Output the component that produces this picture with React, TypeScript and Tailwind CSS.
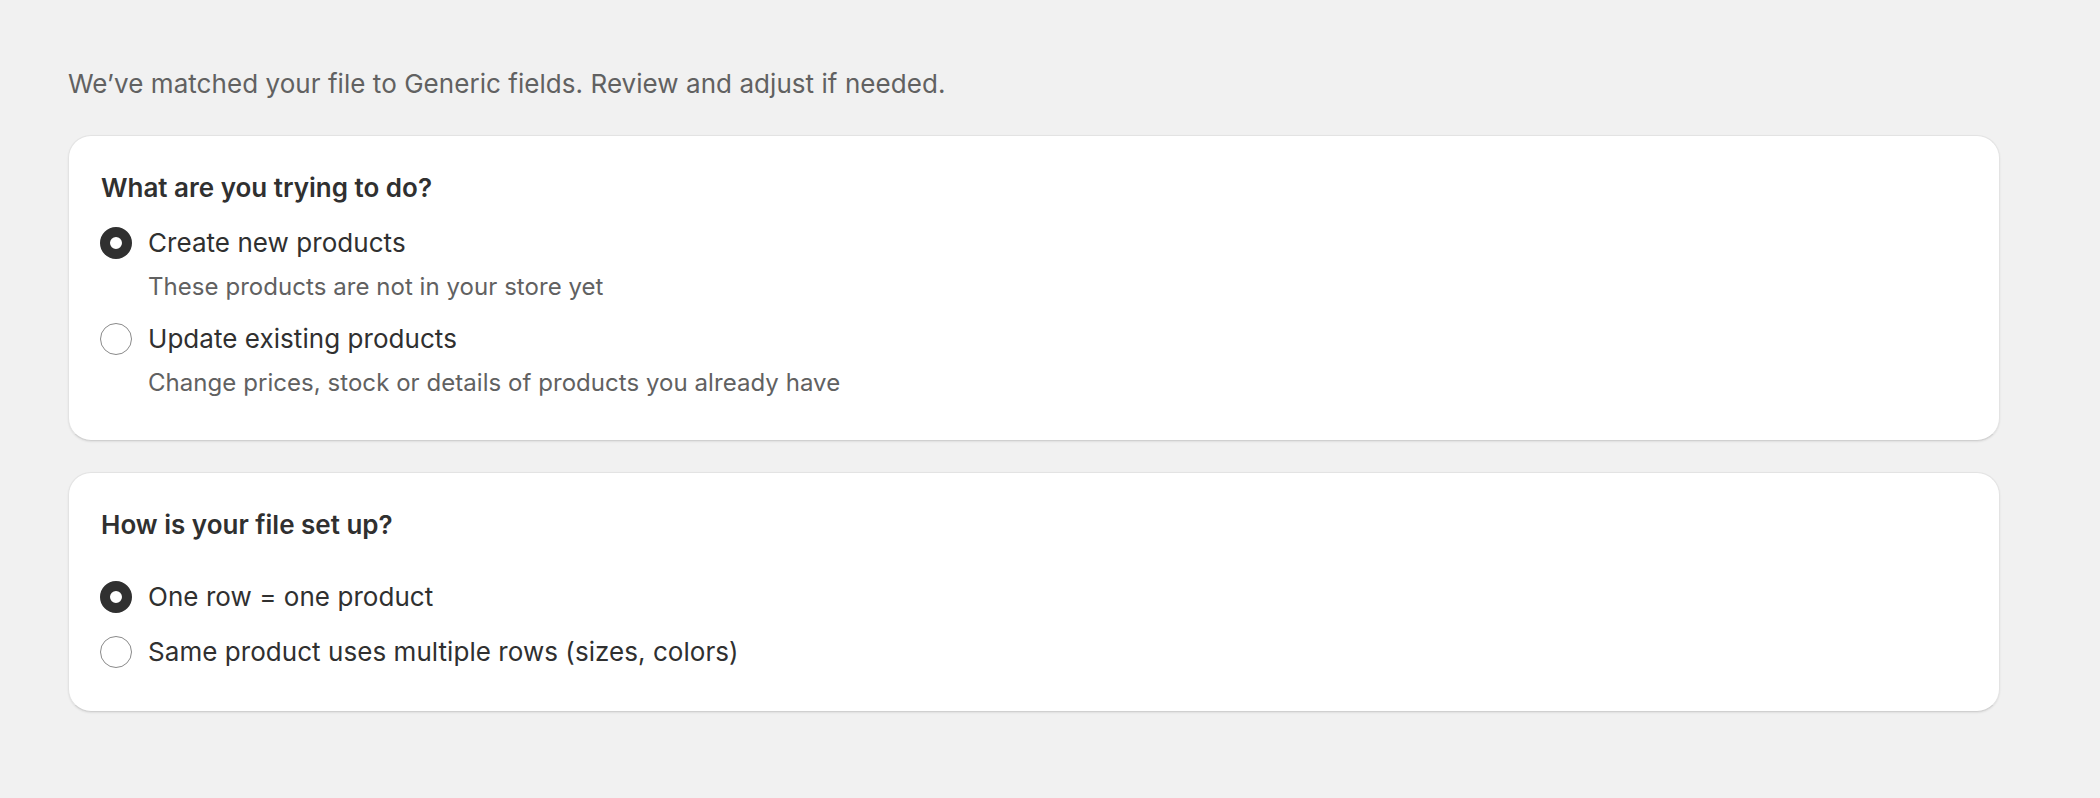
import React from 'react';

type Option = { label: string; description?: string; selected?: boolean };

function Radio({ selected }: { selected?: boolean }) {
  if (selected) {
    return <span className="block h-[32px] w-[32px] shrink-0 rounded-full border-[10px] border-[#303030] bg-white" />;
  }
  return <span className="block h-[32px] w-[32px] shrink-0 rounded-full border-[1.5px] border-[#8a8a8a] bg-white" />;
}

function OptionRow({ option }: { option: Option }) {
  return (
    <div>
      <label className="-ml-[1px] flex h-[32px] items-center gap-[16px]">
        <Radio selected={option.selected} />
        <span className="text-[26px] leading-[32px] tracking-[0.05px] text-[#303030]">{option.label}</span>
      </label>
      {option.description && (
        <p className="mt-[12px] pl-[47px] text-[24px] leading-[32px] tracking-[0.05px] text-[#616161]">{option.description}</p>
      )}
    </div>
  );
}

function Card({ title, options, dense }: { title: string; options: Option[]; dense?: boolean }) {
  return (
    <section
      className={
        dense
          ? 'rounded-[23px] border border-[#e3e3e3] border-b-[#d0d0d0] bg-white px-[32px] pb-[41px] pt-[36px] shadow-[0_1px_2px_rgba(0,0,0,0.08)]'
          : 'rounded-[23px] border border-[#e3e3e3] border-b-[#d0d0d0] bg-white px-[32px] pb-[43px] pt-[36px] shadow-[0_1px_2px_rgba(0,0,0,0.08)]'
      }
    >
      <h2 className="text-[26px] font-semibold leading-[32px] text-[#303030]">{title}</h2>
      <div className={dense ? 'mt-[23px] flex flex-col gap-[20px]' : 'mt-[40px] flex flex-col gap-[23px]'}>
        {options.map((o) => (
          <OptionRow key={o.label} option={o} />
        ))}
      </div>
    </section>
  );
}

export default function App() {
  return (
    <div className="min-h-screen bg-[#f1f1f1] pl-[68px] pr-[100px] pt-[68px]" style={{ fontFamily: 'Inter, "Noto Sans", sans-serif' }}>
      <p className="text-[26px] leading-[32px] tracking-[0.05px] text-[#616161]">We’ve matched your file to Generic fields. Review and adjust if needed.</p>
      <div className="mt-[35px] flex flex-col gap-[31px]">
        <Card
          dense
          title="What are you trying to do?"
          options={[
            { label: 'Create new products', description: 'These products are not in your store yet', selected: true },
            { label: 'Update existing products', description: 'Change prices, stock or details of products you already have' },
          ]}
        />
        <Card
          title="How is your file set up?"
          options={[
            { label: 'One row = one product', selected: true },
            { label: 'Same product uses multiple rows (sizes, colors)' },
          ]}
        />
      </div>
    </div>
  );
}
